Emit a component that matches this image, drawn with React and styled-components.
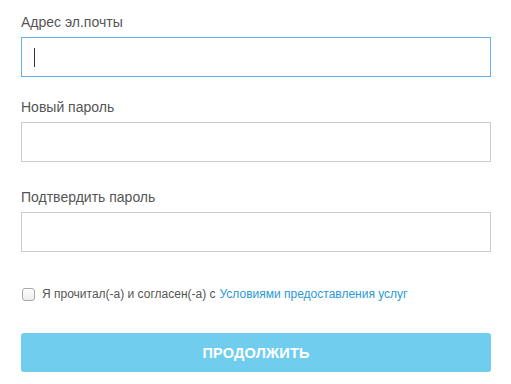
import React from "react";
import styled, { createGlobalStyle } from "styled-components";

const Global = createGlobalStyle`
  html, body { margin: 0; padding: 0; background: #fff; }
  body { font-family: "Liberation Sans", Arial, sans-serif; }
`;

const Form = styled.form`
  width: 470px;
  padding: 13px 0 0 21px;
  display: flex;
  flex-direction: column;
`;

const Field = styled.div`
  display: flex;
  flex-direction: column;
  margin-bottom: ${(p) => p.$mb || 0}px;
`;

const Label = styled.label`
  font-size: 14px;
  line-height: 18px;
  color: #555;
  margin-bottom: 6px;
`;

const InputBox = styled.div`
  box-sizing: border-box;
  height: 40px;
  border: 1px solid ${(p) => (p.$focus ? "#66afe9" : "#ccc")};
  display: flex;
  align-items: center;
  padding-left: 12px;
`;

const Caret = styled.span`
  width: 1px;
  height: 19px;
  background: #333;
`;

const CheckRow = styled.div`
  display: flex;
  align-items: center;
  margin-top: 35px;
  font-size: 12px;
  color: #555;
`;

const Box = styled.span`
  box-sizing: border-box;
  width: 13px;
  height: 13px;
  border: 1px solid #a9a9a9;
  border-radius: 3px;
  background: linear-gradient(#fcfcfc, #eee);
  margin: 0 7px 0 1px;
`;

const Link = styled.a`
  color: #2b9ad7;
  text-decoration: none;
  margin-left: 4px;
`;

const Button = styled.button`
  margin-top: 32px;
  height: 39px;
  border: none;
  border-radius: 3px;
  background: #70cdee;
  color: #fff;
  font-family: "Liberation Sans", Arial, sans-serif;
  font-size: 14.5px;
  font-weight: bold;
  letter-spacing: 0.2px;
`;

export default function App() {
  return (
    <>
      <Global />
      <Form>
        <Field $mb={21}>
          <Label>Адрес эл.почты</Label>
          <InputBox $focus>
            <Caret />
          </InputBox>
        </Field>
        <Field $mb={26}>
          <Label>Новый пароль</Label>
          <InputBox />
        </Field>
        <Field>
          <Label>Подтвердить пароль</Label>
          <InputBox />
        </Field>
        <CheckRow>
          <Box />
          Я прочитал(-а) и согласен(-а) с
          <Link>Условиями предоставления услуг</Link>
        </CheckRow>
        <Button type="button">ПРОДОЛЖИТЬ</Button>
      </Form>
    </>
  );
}
